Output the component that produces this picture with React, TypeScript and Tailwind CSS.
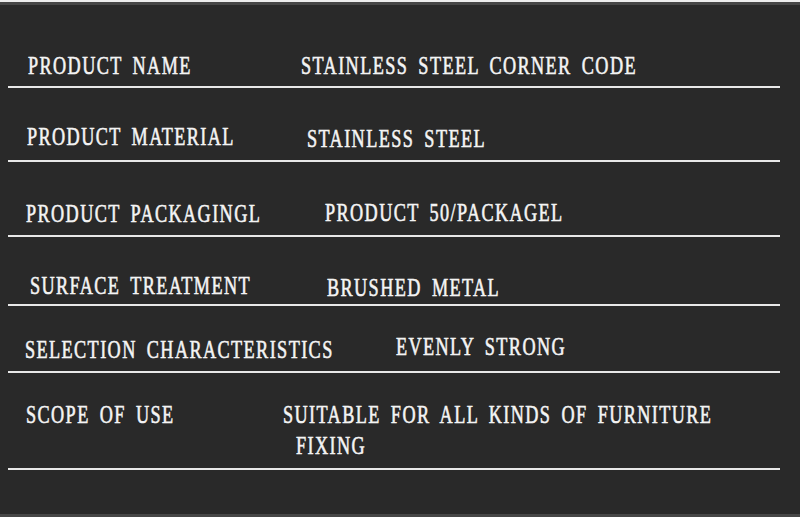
import React from 'react';

type Row = {
  label: string;
  value: string[];
  rowClass: string;
  labelClass: string;
  valueClass: string;
};

// each row gets its own offsets, the source table is not perfectly aligned
const rows: Row[] = [
  {
    label: 'PRODUCT NAME',
    value: ['STAINLESS STEEL CORNER CODE'],
    rowClass: 'h-[83px]',
    labelClass: 'w-[293px] pl-[20px] mt-[48px]',
    valueClass: 'mt-[48px]',
  },
  {
    label: 'PRODUCT MATERIAL',
    value: ['STAINLESS STEEL'],
    rowClass: 'h-[74px]',
    labelClass: 'w-[299px] pl-[19px] mt-[36px]',
    valueClass: 'mt-[38px]',
  },
  {
    label: 'PRODUCT PACKAGINGL',
    value: ['PRODUCT 50/PACKAGEL'],
    rowClass: 'h-[75px]',
    labelClass: 'w-[317px] pl-[18px] mt-[39px]',
    valueClass: 'mt-[38px]',
  },
  {
    label: 'SURFACE TREATMENT',
    value: ['BRUSHED METAL'],
    rowClass: 'h-[69px]',
    labelClass: 'w-[319px] pl-[22px] mt-[36px]',
    valueClass: 'mt-[38px]',
  },
  {
    label: 'SELECTION CHARACTERISTICS',
    value: ['EVENLY STRONG'],
    rowClass: 'h-[67px]',
    labelClass: 'w-[388px] pl-[17px] mt-[31px]',
    valueClass: 'mt-[28px]',
  },
  {
    label: 'SCOPE OF USE',
    value: ['SUITABLE FOR ALL KINDS OF FURNITURE', 'FIXING'],
    rowClass: 'h-[97px]',
    labelClass: 'w-[275px] pl-[18px] mt-[29px]',
    valueClass: 'mt-[29px]',
  },
];

const Txt = ({ children }: { children: React.ReactNode }) => (
  <span className="inline-block origin-left scale-x-70 whitespace-nowrap tracking-[2px] [word-spacing:6px] [-webkit-text-stroke:0.6px_#f4f4f4]">
    {children}
  </span>
);

export default function App() {
  return (
    <div className="w-[800px] h-[532px] overflow-hidden flex flex-col bg-[#292929] font-['Liberation_Serif',serif] text-[26px] leading-[26px] text-[#f4f4f4]">
      <div className="h-[2px] bg-[#ededed]" />
      <div className="h-[3px] bg-[#464646]" />

      <div className="ml-[8px] w-[772px] flex flex-col">
        {rows.map((row, i) => (
          <div key={i} className={`flex items-start border-b-2 border-[#e8e8e8] ${row.rowClass}`}>
            <div className={`shrink-0 ${row.labelClass}`}>
              <Txt>{row.label}</Txt>
            </div>
            <div className={`min-w-0 ${row.valueClass}`}>
              <div>
                <Txt>{row.value[0]}</Txt>
              </div>
              {row.value[1] && (
                <div className="mt-[5px] pl-[13px]">
                  <Txt>{row.value[1]}</Txt>
                </div>
              )}
            </div>
          </div>
        ))}
      </div>

      <div className="flex-1" />
      <div className="h-[3px] bg-[#464646]" />
      <div className="h-[15px] bg-white" />
    </div>
  );
}
